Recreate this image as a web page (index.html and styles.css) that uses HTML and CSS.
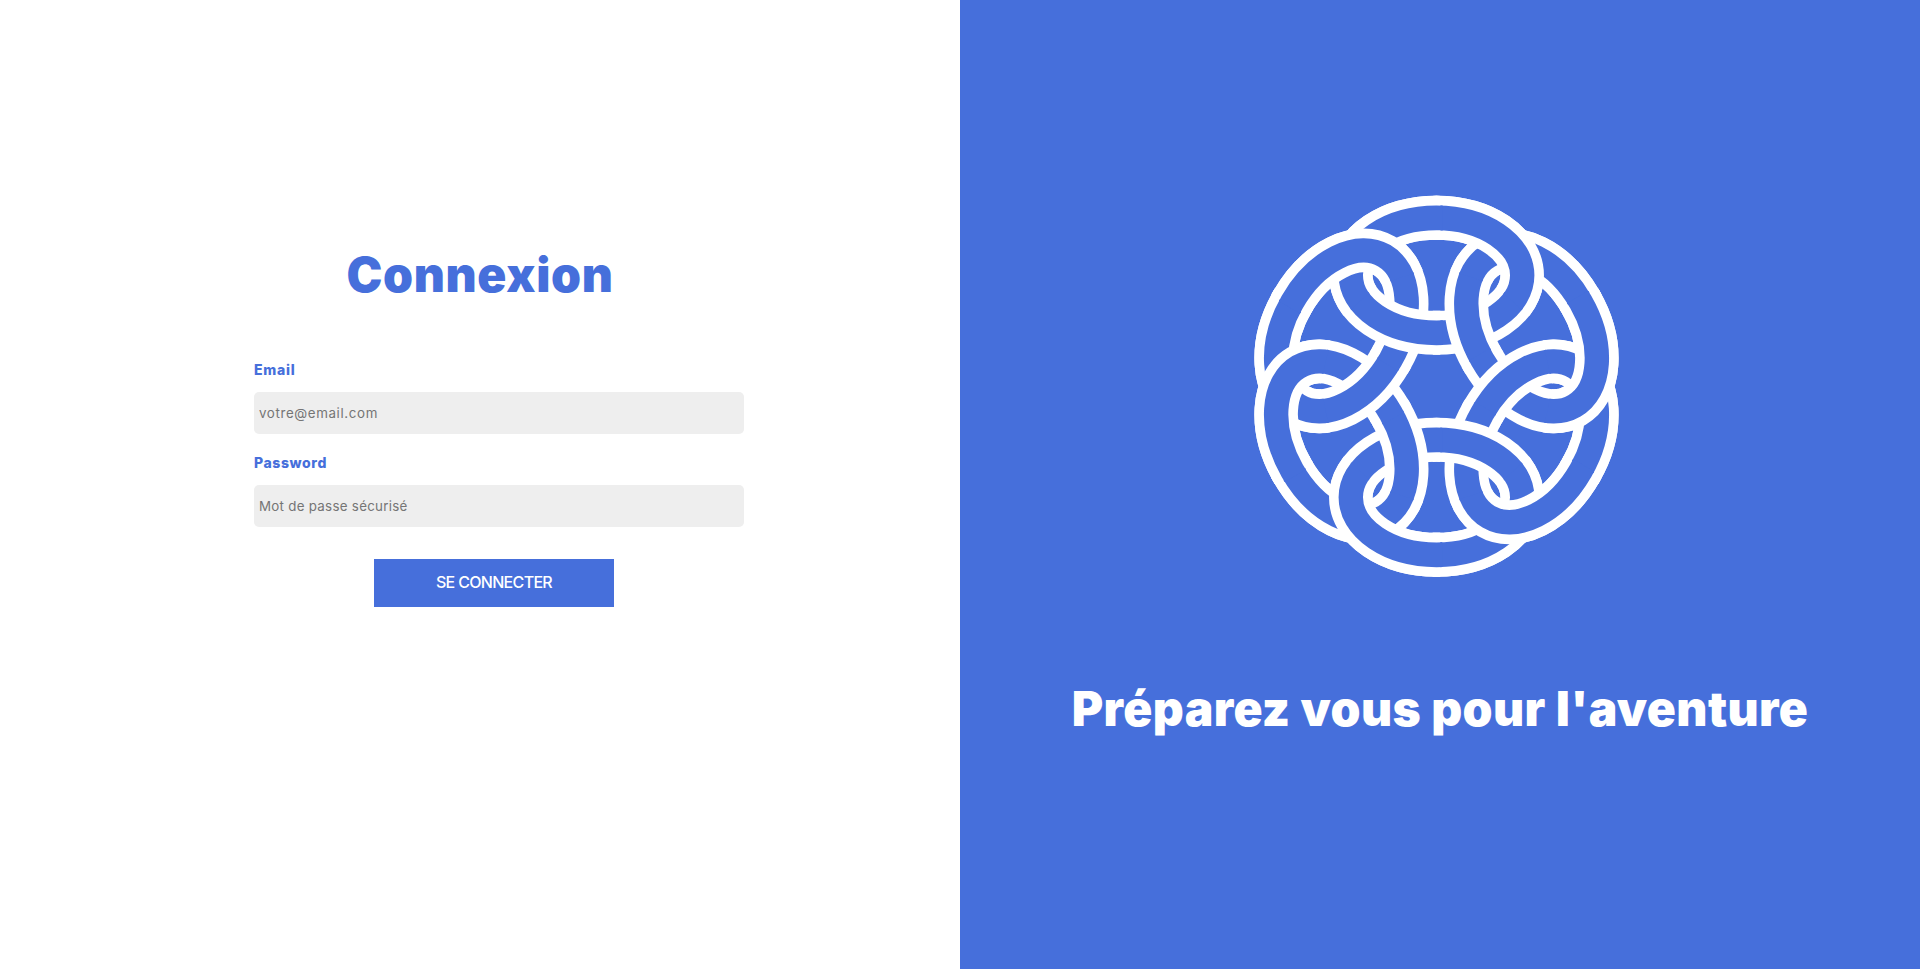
FILE: index.html
```html
<!DOCTYPE html>
<html lang="fr">
<head>
<meta charset="utf-8">
<title>Connexion</title>
<link rel="stylesheet" href="styles.css">
</head>
<body>
<main class="page">
  <section class="login">
    <h1 class="title">Connexion</h1>
    <form class="form">
      <label class="label label-email" for="email">Email</label>
      <input class="field field-email" id="email" type="email" placeholder="votre@email.com">
      <label class="label label-password" for="password">Password</label>
      <input class="field field-password" id="password" type="password" placeholder="Mot de passe sécurisé">
      <button class="submit" type="button">SE CONNECTER</button>
    </form>
  </section>
  <section class="hero">
    <svg class="knot" viewBox="0 0 1200 1230" aria-hidden="true">
      <defs>
        <ellipse id="ring" cx="0" cy="-333" rx="260" ry="172.5"/>
        <clipPath id="wedge"><path d="M-12 10V-700H626V-348L6 10Z"/></clipPath>
        <clipPath id="wedge-fill"><path d="M-18 14V-700H632V-343L9 17Z"/></clipPath>
        <clipPath id="rim"><path d="M-12-350V-700H626V-348L309-165A350 350 0 0 0-12-350Z"/></clipPath>
        <clipPath id="rim-fill"><path d="M-18-344V-700H632V-343L307-156A344 344 0 0 0-18-344Z"/></clipPath>
        <!-- one sixth of the knot: inner crossing first, then the rim crossing -->
        <g id="crossing">
          <g clip-path="url(#wedge)"><use class="ring-edge" href="#ring"/></g>
          <g clip-path="url(#wedge-fill)"><use class="ring-fill" href="#ring"/></g>
          <g clip-path="url(#wedge)"><use class="ring-edge" href="#ring" transform="rotate(60)"/></g>
          <g clip-path="url(#wedge-fill)"><use class="ring-fill" href="#ring" transform="rotate(60)"/></g>
          <g clip-path="url(#rim)"><use class="ring-edge" href="#ring" transform="rotate(60)"/></g>
          <g clip-path="url(#rim-fill)"><use class="ring-fill" href="#ring" transform="rotate(60)"/></g>
          <g clip-path="url(#rim)"><use class="ring-edge" href="#ring"/></g>
          <g clip-path="url(#rim-fill)"><use class="ring-fill" href="#ring"/></g>
        </g>
      </defs>
      <g transform="translate(589.5 619) scale(.989 1)">
        <use href="#crossing"/>
        <use href="#crossing" transform="rotate(60)"/>
        <use href="#crossing" transform="rotate(120)"/>
        <use href="#crossing" transform="rotate(180)"/>
        <use href="#crossing" transform="rotate(240)"/>
        <use href="#crossing" transform="rotate(300)"/>
      </g>
    </svg>
    <h2 class="slogan">Préparez vous pour l'aventure</h2>
  </section>
</main>
</body>
</html>
```
FILE: styles.css
```css
* { box-sizing: border-box; }
body { margin: 0; font-family: Inter, "Open Sans", sans-serif; background: #fff; }
.page { display: grid; grid-template-columns: 1fr 1fr; height: 969px; overflow: hidden; }
.login { padding-top: 239px; }
.title { margin: 0; height: 72px; line-height: 72px; text-align: center; font-size: 48px; font-weight: 900; letter-spacing: .65px; color: #466fdb; }
.form { display: flex; flex-direction: column; width: 490px; margin: 48px 0 0 254px; }
.label { height: 21px; line-height: 21px; font-size: 14px; font-weight: 800; color: #466fdb; }
.label-email { letter-spacing: .75px; }
.label-password { letter-spacing: .6px; }
.field { width: 490px; height: 42px; margin: 12px 0 18px; padding: 0 5px; border: 0; border-radius: 5px; background: #eee; font-family: inherit; font-size: 13.333px; color: #333; }
.field::placeholder { color: #757575; }
.field-email { letter-spacing: .63px; }
.field-password { margin-bottom: 32px; letter-spacing: .28px; }
.submit { width: 240px; height: 48px; margin-left: 120px; padding: 0 0 2px; border: 0; background: #466fdb; color: #fff; font-family: inherit; font-size: 16px; font-weight: 500; letter-spacing: -.68px; }
.hero { display: flex; flex-direction: column; padding-top: 180px; background: #466fdb; }
.knot { width: 400px; height: 410px; margin-left: 280px; }
.ring-edge, .ring-fill { fill: none; stroke: #fff; stroke-width: 132px; }
.ring-fill { stroke: #466fdb; stroke-width: 74px; }
.slogan { margin: 83px 0 0; height: 72px; line-height: 72px; text-align: center; white-space: nowrap; font-size: 48px; font-weight: 900; letter-spacing: .42px; color: #fff; }
```
